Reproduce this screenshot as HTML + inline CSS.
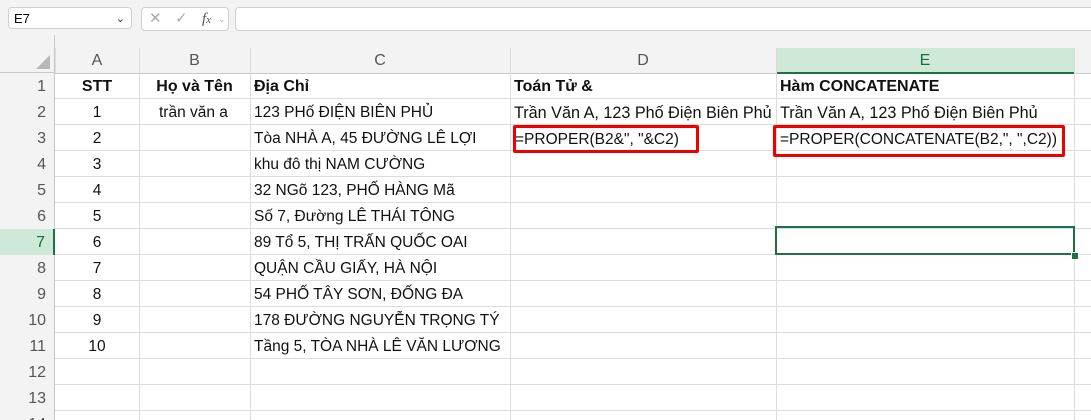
<!DOCTYPE html>
<html><head><meta charset="utf-8"><style>
html,body{margin:0;width:1091px;height:420px;overflow:hidden}
body{background:#fff;font-family:"Liberation Sans","DejaVu Sans",sans-serif;position:relative}
.a{position:absolute}
.top{left:0;top:0;width:1091px;height:48px;background:#f3f3f3}
.box{background:#fff;border:1px solid #d0d0d0;border-radius:4px}
.ch{top:48px;height:25px;background:#f3f3f3;border-bottom:1px solid #c8c8c8;color:#555;font-size:16px;text-align:center;line-height:26px}
.rh{left:0;width:55px;background:#f3f3f3;border-right:1px solid #c8c8c8;color:#555;font-size:16px;text-align:right;box-sizing:border-box;padding-right:8px;line-height:28px}
.vl{top:48px;width:1px;height:372px;background:#dcdcdc}
.hl{left:55px;width:1036px;height:1px;background:#dcdcdc}
.t{font-size:15.5px;line-height:28px;white-space:nowrap;color:#111}
.w{font-size:16.2px}
.b{font-weight:bold;font-size:16px}
</style></head><body>
<div class="a top"></div>
<div class="a box" style="left:8px;top:7px;width:124px;height:22px;font-size:13px;line-height:22px;padding-left:5px;box-sizing:border-box">E7<span style="position:absolute;right:6px;top:0;font-size:11px;color:#333">&#8964;</span></div>
<div class="a box" style="left:141px;top:7px;width:86px;height:22px;color:#aaa;font-size:15px;line-height:22px"><span style="position:absolute;left:7px">✕</span><span style="position:absolute;left:33px">✓</span><span style="position:absolute;left:60px;color:#555;font-style:italic;font-family:'Liberation Serif',serif">f<span style="font-size:11px">x</span></span><span style="position:absolute;left:76px;font-size:9px">⌄</span></div>
<div class="a box" style="left:235px;top:7px;width:870px;height:22px"></div>
<div class="a" style="left:0;top:35px;width:55px;height:38px;background:#f3f3f3;border-right:1px solid #c8c8c8;border-bottom:1px solid #c8c8c8;box-sizing:border-box"></div>
<div class="a" style="left:36px;top:55px;width:0;height:0;border-left:14px solid transparent;border-bottom:14px solid #b8b8b8"></div>
<div class="a ch" style="left:55px;width:1036px"></div>
<div class="a ch" style="left:55px;width:84px">A</div>
<div class="a ch" style="left:139px;width:111px">B</div>
<div class="a ch" style="left:250px;width:260px">C</div>
<div class="a ch" style="left:510px;width:266px">D</div>
<div class="a ch" style="left:776px;width:298px;background:#cfe9d9;border-bottom:2px solid #1e7145;height:24px;color:#1e6b3e">E</div>
<div class="a" style="left:55px;top:48px;width:1px;height:25px;background:#dcdcdc"></div>
<div class="a vl" style="left:139px"></div><div class="a vl" style="left:250px"></div><div class="a vl" style="left:510px"></div><div class="a vl" style="left:776px"></div><div class="a vl" style="left:1074px"></div>
<div class="a hl" style="top:98px"></div><div class="a hl" style="top:124px"></div><div class="a hl" style="top:150px"></div><div class="a hl" style="top:176px"></div><div class="a hl" style="top:202px"></div><div class="a hl" style="top:228px"></div><div class="a hl" style="top:254px"></div><div class="a hl" style="top:280px"></div><div class="a hl" style="top:306px"></div><div class="a hl" style="top:332px"></div><div class="a hl" style="top:358px"></div><div class="a hl" style="top:384px"></div><div class="a hl" style="top:410px"></div>
<div class="a rh" style="top:73px;height:347px"></div>
<div class="a rh" style="top:73px;height:26px">1</div><div class="a rh" style="top:99px;height:26px">2</div><div class="a rh" style="top:125px;height:26px">3</div><div class="a rh" style="top:151px;height:26px">4</div><div class="a rh" style="top:177px;height:26px">5</div><div class="a rh" style="top:203px;height:26px">6</div>
<div class="a rh" style="top:229px;height:26px;background:#cfe9d9;color:#1e6b3e;border-right:2px solid #1e7145">7</div>
<div class="a rh" style="top:255px;height:26px">8</div><div class="a rh" style="top:281px;height:26px">9</div><div class="a rh" style="top:307px;height:26px">10</div><div class="a rh" style="top:333px;height:26px">11</div><div class="a rh" style="top:359px;height:26px">12</div><div class="a rh" style="top:385px;height:26px">13</div><div class="a rh" style="top:411px;height:9px;overflow:hidden">14</div>
<div class="a t b" style="left:55px;width:84px;text-align:center;top:73px">STT</div>
<div class="a t b" style="left:139px;width:111px;text-align:center;top:73px">Họ và Tên</div>
<div class="a t b" style="left:254px;top:73px">Địa Chỉ</div>
<div class="a t b" style="left:514px;top:73px">Toán Tử &amp;</div>
<div class="a t b" style="left:780px;top:73px">Hàm CONCATENATE</div>
<div class="a t" style="left:159px;top:99px">trần văn a</div>
<div class="a t w" style="left:514px;top:99px">Trần Văn A, 123 Phố Điện Biên Phủ</div>
<div class="a t w" style="left:780px;top:99px">Trần Văn A, 123 Phố Điện Biên Phủ</div>
<div class="a t" style="left:515px;top:126px">=PROPER(B2&amp;", "&amp;C2)</div>
<div class="a t" style="left:780px;top:126px">=PROPER(CONCATENATE(B2,", ",C2))</div>
<div class="a" style="left:513px;top:125px;width:186px;height:28px;border:3px solid #e00;border-radius:2px;box-sizing:border-box"></div>
<div class="a" style="left:773px;top:125px;width:292px;height:32px;border:3px solid #e00;border-radius:2px;box-sizing:border-box"></div>
<div class="a t" style="left:55px;width:84px;text-align:center;top:99px">1</div>
<div class="a t" style="left:55px;width:84px;text-align:center;top:125px">2</div>
<div class="a t" style="left:55px;width:84px;text-align:center;top:151px">3</div>
<div class="a t" style="left:55px;width:84px;text-align:center;top:177px">4</div>
<div class="a t" style="left:55px;width:84px;text-align:center;top:203px">5</div>
<div class="a t" style="left:55px;width:84px;text-align:center;top:229px">6</div>
<div class="a t" style="left:55px;width:84px;text-align:center;top:255px">7</div>
<div class="a t" style="left:55px;width:84px;text-align:center;top:281px">8</div>
<div class="a t" style="left:55px;width:84px;text-align:center;top:307px">9</div>
<div class="a t" style="left:55px;width:84px;text-align:center;top:333px">10</div>
<div class="a t" style="left:254px;top:99px">123 PHố ĐIỆN BIÊN PHỦ</div>
<div class="a t" style="left:254px;top:125px">Tòa NHÀ A, 45 ĐƯỜNG LÊ LỢI</div>
<div class="a t" style="left:254px;top:151px">khu đô thị NAM CƯỜNG</div>
<div class="a t" style="left:254px;top:177px">32 NGõ 123, PHỐ HÀNG Mã</div>
<div class="a t" style="left:254px;top:203px">Số 7, Đường LÊ THÁI TÔNG</div>
<div class="a t" style="left:254px;top:229px">89 Tổ 5, THỊ TRẤN QUỐC OAI</div>
<div class="a t" style="left:254px;top:255px">QUẬN CẦU GIẤY, HÀ NỘI</div>
<div class="a t" style="left:254px;top:281px">54 PHỐ TÂY SƠN, ĐỐNG ĐA</div>
<div class="a t" style="left:254px;top:307px">178 ĐƯỜNG NGUYỄN TRỌNG TÝ</div>
<div class="a t" style="left:254px;top:333px">Tầng 5, TÒA NHÀ LÊ VĂN LƯƠNG</div>
<div class="a" style="left:775px;top:226px;width:300px;height:29px;border:2px solid #1e7145;box-sizing:border-box"></div>
<div class="a" style="left:1071px;top:252px;width:6px;height:6px;background:#1e7145;border:1px solid #fff"></div>
</body></html>
